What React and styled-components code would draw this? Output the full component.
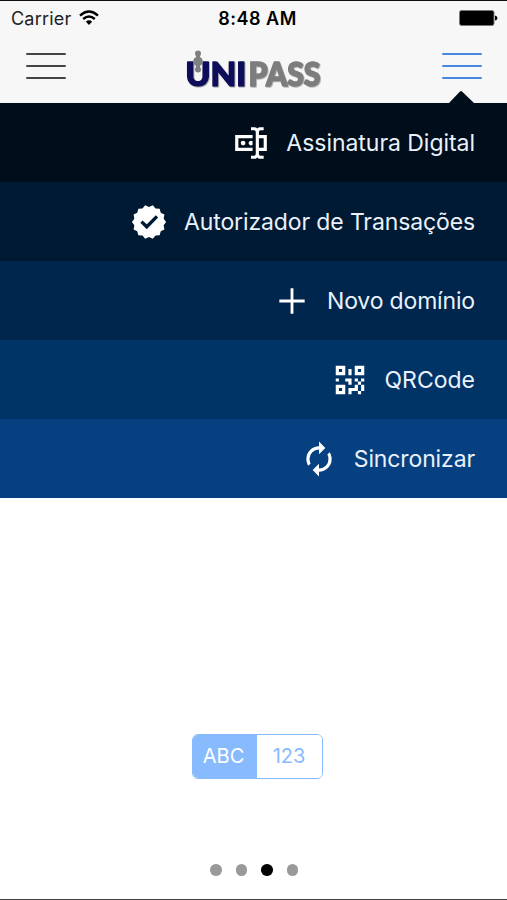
import React from 'react';
import styled, { createGlobalStyle } from 'styled-components';

const GlobalStyle = createGlobalStyle`
  * {
    box-sizing: border-box;
  }

  body {
    margin: 0;
    background: white;
    font-family: Inter, 'Liberation Sans', sans-serif;
  }
`;

const Screen = styled.div`
  display: flex;
  flex-direction: column;
  width: 507px;
  height: 900px;
  border-top: 1px solid #111;
  border-bottom: 1px solid #444;
  background: white;
`;

const Header = styled.header`
  height: 102px;
  flex-shrink: 0;
  background: #f7f7f7;
`;

const StatusBar = styled.div`
  display: grid;
  grid-template-columns: 1fr auto 1fr;
  align-items: center;
  height: 34px;
  padding: 0 9px 0 11px;
  font-size: 18px;
  color: #000;
`;

const Carrier = styled.div`
  display: flex;
  align-items: center;
  gap: 8px;
  color: #222;
  letter-spacing: 0.2px;
`;

const Clock = styled.div`
  padding-left: 6px;
  font-size: 18px;
  font-weight: 600;
  letter-spacing: 0.5px;
`;

const Battery = styled.svg`
  justify-self: end;
`;

const NavBar = styled.div`
  display: flex;
  justify-content: space-between;
  height: 68px;
  padding: 0 25px 0 26px;
`;

const MenuButton = styled.div`
  position: relative;
  display: flex;
  flex-direction: column;
  gap: 10px;
  width: 40px;
  padding-top: 18px;
`;

const Bar = styled.span`
  height: 2px;
  border-radius: 1px;
  background: ${props => props.color};
`;

const Pointer = styled.svg`
  position: absolute;
  left: 7px;
  bottom: 0;
`;

const Logo = styled.svg`
  margin-top: 13px;
  overflow: visible;
`;

const Item = styled.div`
  display: flex;
  justify-content: flex-end;
  align-items: center;
  gap: 16px;
  height: 79px;
  flex-shrink: 0;
  padding-right: 32px;
  background: ${props => props.shade};
  color: #eaf1fb;
`;

const Label = styled.span`
  font-size: 23px;
  white-space: nowrap;
  letter-spacing: ${props => props.spacing}px;
`;

const Content = styled.main`
  flex: 1;
  display: flex;
  flex-direction: column;
  align-items: center;
  justify-content: flex-end;
`;

const Segmented = styled.div`
  display: flex;
  width: 131px;
  height: 45px;
  margin: 0 0 85.5px 7px;
  border: 1.5px solid #88bbfd;
  border-radius: 6px;
  overflow: hidden;
`;

const Segment = styled.div`
  flex: ${props => (props.active ? '0 0 64px' : 1)};
  display: flex;
  align-items: center;
  justify-content: center;
  padding-right: ${props => (props.active ? 2 : 0)}px;
  font-size: 20px;
  background: ${props => (props.active ? '#88bbfd' : 'white')};
  color: ${props => (props.active ? 'white' : '#88bbfd')};
`;

const Dots = styled.div`
  display: flex;
  gap: 14px;
  margin: 0 0 23.5px 1px;
`;

const Dot = styled.span`
  width: 11.5px;
  height: 11.5px;
  border-radius: 50%;
  background: ${props => (props.active ? '#000' : '#999')};
`;

const starPath = (points, outer, inner) => {
  const corners = [];
  for (let i = 0; i < points * 2; i += 1) {
    const r = i % 2 ? inner : outer;
    const a = (Math.PI * i) / points;
    corners.push(`${(12 + r * Math.cos(a)).toFixed(2)},${(12 + r * Math.sin(a)).toFixed(2)}`);
  }
  return `M${corners.join('L')}Z`;
};

const ICONS = {
  textbox: 'M17,7H22V17H17V19A1,1 0 0,0 18,20H20V22H17.5C16.95,22 16,21.55 16,21C16,21.55 15.05,22 14.5,22H12V20H14A1,1 0 0,0 15,19V5A1,1 0 0,0 14,4H12V2H14.5C15.05,2 16,2.45 16,3C16,2.45 16.95,2 17.5,2H20V4H18A1,1 0 0,0 17,5V7M2,7H13V9H4V15H13V17H2V7M20,15V9H17V15H20M8.5,12A1.5,1.5 0 0,0 7,10.5A1.5,1.5 0 0,0 5.5,12A1.5,1.5 0 0,0 7,13.5A1.5,1.5 0 0,0 8.5,12M13,10.89C12.39,10.33 11.44,10.38 10.88,11C10.32,11.6 10.37,12.55 11,13.11C11.55,13.63 12.43,13.63 13,13.11V10.89Z',
  badge: `${starPath(14, 10.8, 9.5)}M10.6,16.5L17.8,9.2L16.3,7.7L10.6,13.4L7.9,11L6.5,12.5L10.6,16.5Z`,
  plus: 'M11.1,4H12.9V11.1H20V12.9H12.9V20H11.1V12.9H4V11.1H11.1Z',
  qrcode: 'M3,11H5V13H3V11M11,5H13V9H11V5M9,11H13V15H11V13H9V11M15,11H17V13H19V11H21V13H19V15H21V19H19V21H17V19H13V21H11V17H15V15H17V13H15V11M19,19V15H17V19H19M15,3H21V9H15V3M17,5V7H19V5H17M3,3H9V9H3V3M5,5V7H7V5H5M3,15H9V21H3V15M5,17V19H7V17H5Z',
  renew: 'M12,6V9L16,5L12,1V4A8,8 0 0,0 4,12C4,13.57 4.46,15.03 5.24,16.26L6.7,14.8C6.25,13.97 6,13 6,12A6,6 0 0,1 12,6M18.76,7.74L17.3,9.2C17.74,10.04 18,11 18,12A6,6 0 0,1 12,18V15L8,19L12,23V20A8,8 0 0,0 20,12C20,10.43 19.54,8.97 18.76,7.74Z',
};

const ITEMS = [
  { icon: 'textbox', label: 'Assinatura Digital', shade: '#000d1a', spacing: -0.04 },
  { icon: 'badge', label: 'Autorizador de Transações', shade: '#001a33', spacing: -0.12 },
  { icon: 'plus', label: 'Novo domínio', shade: '#00264d', spacing: -0.16 },
  { icon: 'qrcode', label: 'QRCode', shade: '#003366', spacing: 0 },
  { icon: 'renew', label: 'Sincronizar', shade: '#064080', spacing: -0.12 },
];

const Menu = ({ color, open }) => (
  <MenuButton>
    <Bar color={color} />
    <Bar color={color} />
    <Bar color={color} />
    {open && (
      <Pointer width="26" height="13" viewBox="0 0 26 13">
        <path d="M0 13L11 1.5Q12 0.5 13 1.5L25 13Z" fill="#000d1a" />
      </Pointer>
    )}
  </MenuButton>
);

const App = () => (
  <>
    <GlobalStyle />
    <Screen>
      <Header>
        <StatusBar>
          <Carrier>
            Carrier
            <svg width="20" height="16" viewBox="0 0 20 16" fill="none" stroke="#000" strokeWidth="2.4">
              <path d="M1 5.6Q10 -2.4 19 5.6" />
              <path d="M4.2 9Q10 3.8 15.8 9" />
              <path d="M10 15L6.9 11.7Q10 9 13.1 11.7Z" fill="#000" stroke="none" />
            </svg>
          </Carrier>
          <Clock>8:48 AM</Clock>
          <Battery width="39" height="16" viewBox="0 0 39 16">
            <rect x="0.5" y="0.5" width="34.5" height="15" rx="2" fill="#000" stroke="#777" />
            <path d="M36 5.5Q38.5 6 38.5 8T36 10.5Z" fill="#000" />
          </Battery>
        </StatusBar>
        <NavBar>
          <Menu color="#444" />
          <Logo width="140" height="50" viewBox="0 0 140 50">
            <defs>
              <filter id="shadow">
                <feDropShadow dx="0.8" dy="0.8" stdDeviation="0.6" floodColor="#777" floodOpacity="0.6" />
              </filter>
            </defs>
            <g
              filter="url(#shadow)"
              fontFamily="Lato, sans-serif"
              fontWeight="900"
              fontSize="32"
              strokeWidth="1.5"
              strokeLinejoin="round"
            >
              <text x="1.5" y="37.5" fill="#08085c" stroke="#08085c" textLength="61" lengthAdjust="spacingAndGlyphs">UNI</text>
              <text x="64.5" y="37.5" fill="#7d7d7d" stroke="#7d7d7d" textLength="72" lengthAdjust="spacingAndGlyphs">PASS</text>
            </g>
            <g fill="#808080">
              <circle cx="14" cy="5.5" r="3" />
              <path d="M12 7H16V21H12Z" />
              <circle cx="14" cy="13.5" r="4.8" />
              <circle cx="14" cy="21.5" r="3" />
            </g>
          </Logo>
          <Menu color="#4a88e0" open />
        </NavBar>
      </Header>
      {ITEMS.map(item => (
        <Item key={item.icon} shade={item.shade}>
          <svg width="38" height="38" viewBox="0 0 24 24">
            <path d={ICONS[item.icon]} fill="#fff" fillRule="evenodd" />
          </svg>
          <Label spacing={item.spacing}>{item.label}</Label>
        </Item>
      ))}
      <Content>
        <Segmented>
          <Segment active>ABC</Segment>
          <Segment>123</Segment>
        </Segmented>
        <Dots>
          <Dot />
          <Dot />
          <Dot active />
          <Dot />
        </Dots>
      </Content>
    </Screen>
  </>
);

export default App;
